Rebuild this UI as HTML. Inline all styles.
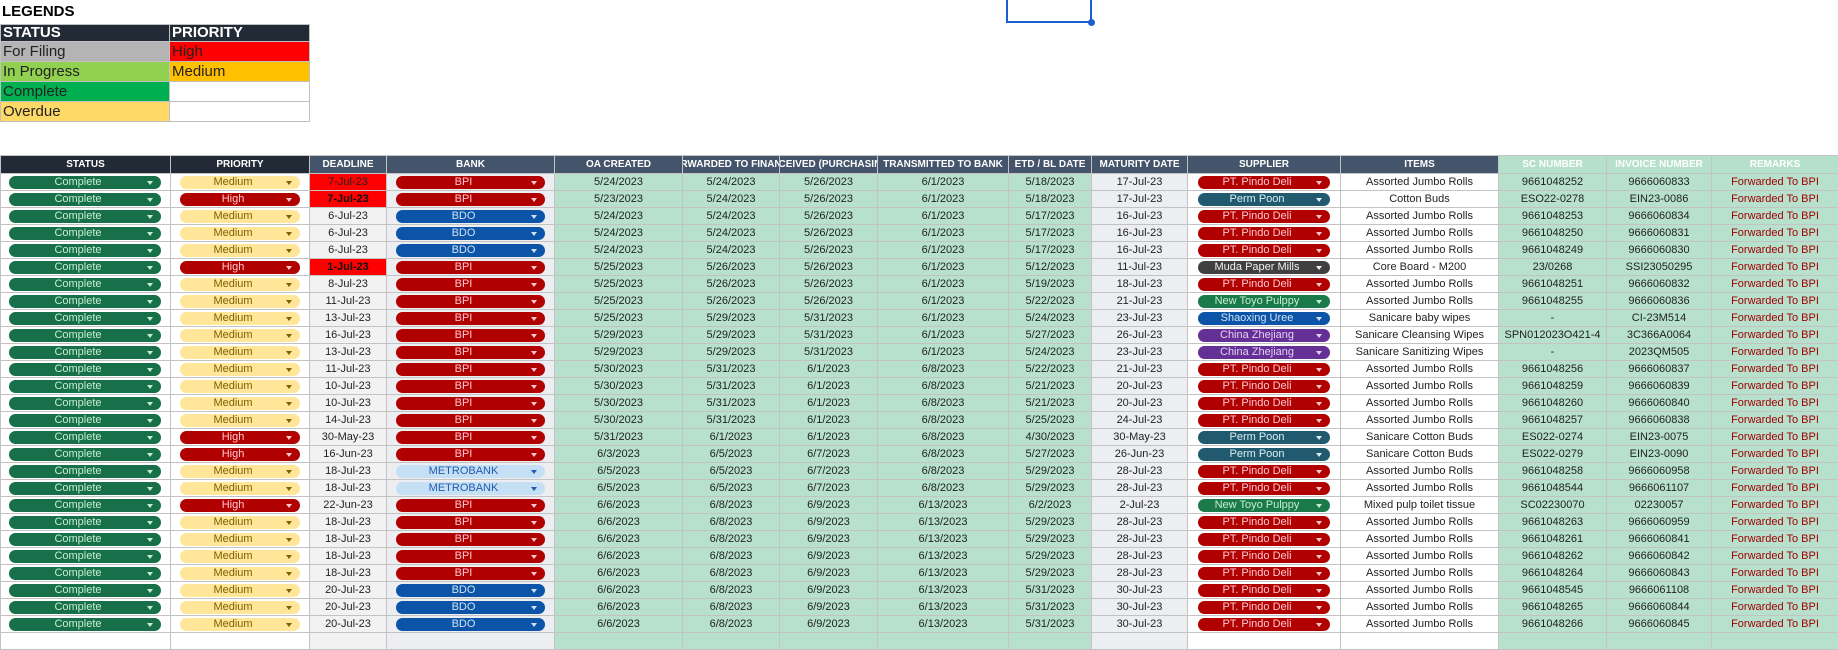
<!DOCTYPE html>
<html><head><meta charset="utf-8"><style>
*{margin:0;padding:0;box-sizing:border-box}
body{width:1838px;height:636px;overflow:hidden;background:#fff;font-family:"Liberation Sans",sans-serif;position:relative}
.lg{position:absolute;left:2px;top:3px;font-weight:bold;font-size:15px;color:#000}
.lt{position:absolute;left:0;top:24px;border-collapse:collapse;table-layout:fixed}
.lt td{border:1px solid #c0c0c0;height:20px;font-size:15px;padding-left:2px;color:#222;line-height:18px;white-space:nowrap}
.lt tr:first-child td{background:#222a35;color:#fff;font-weight:bold;height:17px;line-height:16px}
.sel{position:absolute;left:1006px;top:-2px;width:86px;height:25px;border:2px solid #1a5fd0}
.sel:after{content:"";position:absolute;right:-5px;bottom:-5px;width:7px;height:7px;border-radius:50%;background:#1a5fd0}
.t{position:absolute;left:0;top:155px;border-collapse:collapse;table-layout:fixed;width:1838px}
.t td,.t th{border:1px solid #c3c3c3;height:17px;font-size:11px;text-align:center;white-space:nowrap;overflow:hidden;color:#222;padding:0}
.t th{height:18px;font-size:10px;color:#fff;background:#44546a;font-weight:bold}
.t th.k{background:#222a35}.t th.q{background:#b5e0cb}
.t th div{display:flex;justify-content:center;overflow:hidden}
td.d{background:#f2f2f2}td.rd{background:#ff0000}td.rb{background:#ff0000;font-weight:bold;color:#111}
td.b,td.mt{background:#eceef2}td.n{background:#b7e1cd}
td.rm{background:#b7e1cd;color:#a00000}
.p{display:block;height:13px;line-height:13px;border-radius:7px;font-style:normal;font-size:11px;position:relative;padding-right:14px}
.p:after{content:"";position:absolute;right:8px;top:5px;border-left:3.5px solid transparent;border-right:3.5px solid transparent;border-top:4px solid currentColor}
.s .p{margin:0 9px 0 8px}.pr .p{margin:0 9px 0 9px}.b .p{margin:0 9px 0 9px}.sp .p{margin:0 10px 0 10px}
.g{background:#17704a;color:#c6efce}.m{background:#ffe699;color:#7f6000}.h{background:#b00000;color:#ffc7ce}
.r{background:#b00000;color:#ffc7ce}.bd{background:#0b54a8;color:#cfe2f3}.mb{background:#c5dff5;color:#1f5bb0}
.pp{background:#215a6e;color:#d9eef5}.mu{background:#404040;color:#f0f0f0}.nt{background:#1a7a4a;color:#c6efce}
.sx{background:#0b54a8;color:#cfe2f3}.cz{background:#653096;color:#e4d0f5}
</style></head><body>
<div class="lg">LEGENDS</div>
<table class="lt"><colgroup><col style="width:169px"><col style="width:140px"></colgroup>
<tr><td>STATUS</td><td>PRIORITY</td></tr>
<tr><td style="background:#b4b4b4">For Filing</td><td style="background:#ff0000">High</td></tr>
<tr><td style="background:#92d050">In Progress</td><td style="background:#ffc000">Medium</td></tr>
<tr><td style="background:#00b050">Complete</td><td></td></tr>
<tr><td style="background:#ffd966">Overdue</td><td></td></tr>
</table>
<div class="sel"></div>
<table class="t"><colgroup><col style="width:170px"><col style="width:139px"><col style="width:77px"><col style="width:168px"><col style="width:128px"><col style="width:97px"><col style="width:98px"><col style="width:131px"><col style="width:83px"><col style="width:96px"><col style="width:153px"><col style="width:158px"><col style="width:108px"><col style="width:105px"><col style="width:127px"></colgroup>
<tr><th class="k">STATUS</th><th class="k">PRIORITY</th><th>DEADLINE</th><th>BANK</th><th>OA CREATED</th><th><div>FORWARDED TO FINANCE</div></th><th><div>RECEIVED (PURCHASING)</div></th><th>TRANSMITTED TO BANK</th><th>ETD / BL DATE</th><th>MATURITY DATE</th><th>SUPPLIER</th><th>ITEMS</th><th class="q">SC NUMBER</th><th class="q">INVOICE NUMBER</th><th class="q">REMARKS</th></tr>
<tr><td class="s"><i class="p g">Complete</i></td><td class="pr"><i class="p m">Medium</i></td><td class="rd">7-Jul-23</td><td class="b"><i class="p r">BPI</i></td><td class="n">5/24/2023</td><td class="n">5/24/2023</td><td class="n">5/26/2023</td><td class="n">6/1/2023</td><td class="n">5/18/2023</td><td class="mt">17-Jul-23</td><td class="sp"><i class="p r">PT. Pindo Deli</i></td><td>Assorted Jumbo Rolls</td><td class="n">9661048252</td><td class="n">9666060833</td><td class="rm">Forwarded To BPI</td></tr>
<tr><td class="s"><i class="p g">Complete</i></td><td class="pr"><i class="p h">High</i></td><td class="rb">7-Jul-23</td><td class="b"><i class="p r">BPI</i></td><td class="n">5/23/2023</td><td class="n">5/24/2023</td><td class="n">5/26/2023</td><td class="n">6/1/2023</td><td class="n">5/18/2023</td><td class="mt">17-Jul-23</td><td class="sp"><i class="p pp">Perm Poon</i></td><td>Cotton Buds</td><td class="n">ESO22-0278</td><td class="n">EIN23-0086</td><td class="rm">Forwarded To BPI</td></tr>
<tr><td class="s"><i class="p g">Complete</i></td><td class="pr"><i class="p m">Medium</i></td><td class="d">6-Jul-23</td><td class="b"><i class="p bd">BDO</i></td><td class="n">5/24/2023</td><td class="n">5/24/2023</td><td class="n">5/26/2023</td><td class="n">6/1/2023</td><td class="n">5/17/2023</td><td class="mt">16-Jul-23</td><td class="sp"><i class="p r">PT. Pindo Deli</i></td><td>Assorted Jumbo Rolls</td><td class="n">9661048253</td><td class="n">9666060834</td><td class="rm">Forwarded To BPI</td></tr>
<tr><td class="s"><i class="p g">Complete</i></td><td class="pr"><i class="p m">Medium</i></td><td class="d">6-Jul-23</td><td class="b"><i class="p bd">BDO</i></td><td class="n">5/24/2023</td><td class="n">5/24/2023</td><td class="n">5/26/2023</td><td class="n">6/1/2023</td><td class="n">5/17/2023</td><td class="mt">16-Jul-23</td><td class="sp"><i class="p r">PT. Pindo Deli</i></td><td>Assorted Jumbo Rolls</td><td class="n">9661048250</td><td class="n">9666060831</td><td class="rm">Forwarded To BPI</td></tr>
<tr><td class="s"><i class="p g">Complete</i></td><td class="pr"><i class="p m">Medium</i></td><td class="d">6-Jul-23</td><td class="b"><i class="p bd">BDO</i></td><td class="n">5/24/2023</td><td class="n">5/24/2023</td><td class="n">5/26/2023</td><td class="n">6/1/2023</td><td class="n">5/17/2023</td><td class="mt">16-Jul-23</td><td class="sp"><i class="p r">PT. Pindo Deli</i></td><td>Assorted Jumbo Rolls</td><td class="n">9661048249</td><td class="n">9666060830</td><td class="rm">Forwarded To BPI</td></tr>
<tr><td class="s"><i class="p g">Complete</i></td><td class="pr"><i class="p h">High</i></td><td class="rb">1-Jul-23</td><td class="b"><i class="p r">BPI</i></td><td class="n">5/25/2023</td><td class="n">5/26/2023</td><td class="n">5/26/2023</td><td class="n">6/1/2023</td><td class="n">5/12/2023</td><td class="mt">11-Jul-23</td><td class="sp"><i class="p mu">Muda Paper Mills</i></td><td>Core Board - M200</td><td class="n">23/0268</td><td class="n">SSI23050295</td><td class="rm">Forwarded To BPI</td></tr>
<tr><td class="s"><i class="p g">Complete</i></td><td class="pr"><i class="p m">Medium</i></td><td class="d">8-Jul-23</td><td class="b"><i class="p r">BPI</i></td><td class="n">5/25/2023</td><td class="n">5/26/2023</td><td class="n">5/26/2023</td><td class="n">6/1/2023</td><td class="n">5/19/2023</td><td class="mt">18-Jul-23</td><td class="sp"><i class="p r">PT. Pindo Deli</i></td><td>Assorted Jumbo Rolls</td><td class="n">9661048251</td><td class="n">9666060832</td><td class="rm">Forwarded To BPI</td></tr>
<tr><td class="s"><i class="p g">Complete</i></td><td class="pr"><i class="p m">Medium</i></td><td class="d">11-Jul-23</td><td class="b"><i class="p r">BPI</i></td><td class="n">5/25/2023</td><td class="n">5/26/2023</td><td class="n">5/26/2023</td><td class="n">6/1/2023</td><td class="n">5/22/2023</td><td class="mt">21-Jul-23</td><td class="sp"><i class="p nt">New Toyo Pulppy</i></td><td>Assorted Jumbo Rolls</td><td class="n">9661048255</td><td class="n">9666060836</td><td class="rm">Forwarded To BPI</td></tr>
<tr><td class="s"><i class="p g">Complete</i></td><td class="pr"><i class="p m">Medium</i></td><td class="d">13-Jul-23</td><td class="b"><i class="p r">BPI</i></td><td class="n">5/25/2023</td><td class="n">5/29/2023</td><td class="n">5/31/2023</td><td class="n">6/1/2023</td><td class="n">5/24/2023</td><td class="mt">23-Jul-23</td><td class="sp"><i class="p sx">Shaoxing Uree</i></td><td>Sanicare baby wipes</td><td class="n">-</td><td class="n">CI-23M514</td><td class="rm">Forwarded To BPI</td></tr>
<tr><td class="s"><i class="p g">Complete</i></td><td class="pr"><i class="p m">Medium</i></td><td class="d">16-Jul-23</td><td class="b"><i class="p r">BPI</i></td><td class="n">5/29/2023</td><td class="n">5/29/2023</td><td class="n">5/31/2023</td><td class="n">6/1/2023</td><td class="n">5/27/2023</td><td class="mt">26-Jul-23</td><td class="sp"><i class="p cz">China Zhejiang</i></td><td>Sanicare Cleansing Wipes</td><td class="n">SPN012023O421-4</td><td class="n">3C366A0064</td><td class="rm">Forwarded To BPI</td></tr>
<tr><td class="s"><i class="p g">Complete</i></td><td class="pr"><i class="p m">Medium</i></td><td class="d">13-Jul-23</td><td class="b"><i class="p r">BPI</i></td><td class="n">5/29/2023</td><td class="n">5/29/2023</td><td class="n">5/31/2023</td><td class="n">6/1/2023</td><td class="n">5/24/2023</td><td class="mt">23-Jul-23</td><td class="sp"><i class="p cz">China Zhejiang</i></td><td>Sanicare Sanitizing Wipes</td><td class="n">-</td><td class="n">2023QM505</td><td class="rm">Forwarded To BPI</td></tr>
<tr><td class="s"><i class="p g">Complete</i></td><td class="pr"><i class="p m">Medium</i></td><td class="d">11-Jul-23</td><td class="b"><i class="p r">BPI</i></td><td class="n">5/30/2023</td><td class="n">5/31/2023</td><td class="n">6/1/2023</td><td class="n">6/8/2023</td><td class="n">5/22/2023</td><td class="mt">21-Jul-23</td><td class="sp"><i class="p r">PT. Pindo Deli</i></td><td>Assorted Jumbo Rolls</td><td class="n">9661048256</td><td class="n">9666060837</td><td class="rm">Forwarded To BPI</td></tr>
<tr><td class="s"><i class="p g">Complete</i></td><td class="pr"><i class="p m">Medium</i></td><td class="d">10-Jul-23</td><td class="b"><i class="p r">BPI</i></td><td class="n">5/30/2023</td><td class="n">5/31/2023</td><td class="n">6/1/2023</td><td class="n">6/8/2023</td><td class="n">5/21/2023</td><td class="mt">20-Jul-23</td><td class="sp"><i class="p r">PT. Pindo Deli</i></td><td>Assorted Jumbo Rolls</td><td class="n">9661048259</td><td class="n">9666060839</td><td class="rm">Forwarded To BPI</td></tr>
<tr><td class="s"><i class="p g">Complete</i></td><td class="pr"><i class="p m">Medium</i></td><td class="d">10-Jul-23</td><td class="b"><i class="p r">BPI</i></td><td class="n">5/30/2023</td><td class="n">5/31/2023</td><td class="n">6/1/2023</td><td class="n">6/8/2023</td><td class="n">5/21/2023</td><td class="mt">20-Jul-23</td><td class="sp"><i class="p r">PT. Pindo Deli</i></td><td>Assorted Jumbo Rolls</td><td class="n">9661048260</td><td class="n">9666060840</td><td class="rm">Forwarded To BPI</td></tr>
<tr><td class="s"><i class="p g">Complete</i></td><td class="pr"><i class="p m">Medium</i></td><td class="d">14-Jul-23</td><td class="b"><i class="p r">BPI</i></td><td class="n">5/30/2023</td><td class="n">5/31/2023</td><td class="n">6/1/2023</td><td class="n">6/8/2023</td><td class="n">5/25/2023</td><td class="mt">24-Jul-23</td><td class="sp"><i class="p r">PT. Pindo Deli</i></td><td>Assorted Jumbo Rolls</td><td class="n">9661048257</td><td class="n">9666060838</td><td class="rm">Forwarded To BPI</td></tr>
<tr><td class="s"><i class="p g">Complete</i></td><td class="pr"><i class="p h">High</i></td><td class="d">30-May-23</td><td class="b"><i class="p r">BPI</i></td><td class="n">5/31/2023</td><td class="n">6/1/2023</td><td class="n">6/1/2023</td><td class="n">6/8/2023</td><td class="n">4/30/2023</td><td class="mt">30-May-23</td><td class="sp"><i class="p pp">Perm Poon</i></td><td>Sanicare Cotton Buds</td><td class="n">ES022-0274</td><td class="n">EIN23-0075</td><td class="rm">Forwarded To BPI</td></tr>
<tr><td class="s"><i class="p g">Complete</i></td><td class="pr"><i class="p h">High</i></td><td class="d">16-Jun-23</td><td class="b"><i class="p r">BPI</i></td><td class="n">6/3/2023</td><td class="n">6/5/2023</td><td class="n">6/7/2023</td><td class="n">6/8/2023</td><td class="n">5/27/2023</td><td class="mt">26-Jun-23</td><td class="sp"><i class="p pp">Perm Poon</i></td><td>Sanicare Cotton Buds</td><td class="n">ES022-0279</td><td class="n">EIN23-0090</td><td class="rm">Forwarded To BPI</td></tr>
<tr><td class="s"><i class="p g">Complete</i></td><td class="pr"><i class="p m">Medium</i></td><td class="d">18-Jul-23</td><td class="b"><i class="p mb">METROBANK</i></td><td class="n">6/5/2023</td><td class="n">6/5/2023</td><td class="n">6/7/2023</td><td class="n">6/8/2023</td><td class="n">5/29/2023</td><td class="mt">28-Jul-23</td><td class="sp"><i class="p r">PT. Pindo Deli</i></td><td>Assorted Jumbo Rolls</td><td class="n">9661048258</td><td class="n">9666060958</td><td class="rm">Forwarded To BPI</td></tr>
<tr><td class="s"><i class="p g">Complete</i></td><td class="pr"><i class="p m">Medium</i></td><td class="d">18-Jul-23</td><td class="b"><i class="p mb">METROBANK</i></td><td class="n">6/5/2023</td><td class="n">6/5/2023</td><td class="n">6/7/2023</td><td class="n">6/8/2023</td><td class="n">5/29/2023</td><td class="mt">28-Jul-23</td><td class="sp"><i class="p r">PT. Pindo Deli</i></td><td>Assorted Jumbo Rolls</td><td class="n">9661048544</td><td class="n">9666061107</td><td class="rm">Forwarded To BPI</td></tr>
<tr><td class="s"><i class="p g">Complete</i></td><td class="pr"><i class="p h">High</i></td><td class="d">22-Jun-23</td><td class="b"><i class="p r">BPI</i></td><td class="n">6/6/2023</td><td class="n">6/8/2023</td><td class="n">6/9/2023</td><td class="n">6/13/2023</td><td class="n">6/2/2023</td><td class="mt">2-Jul-23</td><td class="sp"><i class="p nt">New Toyo Pulppy</i></td><td>Mixed pulp toilet tissue</td><td class="n">SC02230070</td><td class="n">02230057</td><td class="rm">Forwarded To BPI</td></tr>
<tr><td class="s"><i class="p g">Complete</i></td><td class="pr"><i class="p m">Medium</i></td><td class="d">18-Jul-23</td><td class="b"><i class="p r">BPI</i></td><td class="n">6/6/2023</td><td class="n">6/8/2023</td><td class="n">6/9/2023</td><td class="n">6/13/2023</td><td class="n">5/29/2023</td><td class="mt">28-Jul-23</td><td class="sp"><i class="p r">PT. Pindo Deli</i></td><td>Assorted Jumbo Rolls</td><td class="n">9661048263</td><td class="n">9666060959</td><td class="rm">Forwarded To BPI</td></tr>
<tr><td class="s"><i class="p g">Complete</i></td><td class="pr"><i class="p m">Medium</i></td><td class="d">18-Jul-23</td><td class="b"><i class="p r">BPI</i></td><td class="n">6/6/2023</td><td class="n">6/8/2023</td><td class="n">6/9/2023</td><td class="n">6/13/2023</td><td class="n">5/29/2023</td><td class="mt">28-Jul-23</td><td class="sp"><i class="p r">PT. Pindo Deli</i></td><td>Assorted Jumbo Rolls</td><td class="n">9661048261</td><td class="n">9666060841</td><td class="rm">Forwarded To BPI</td></tr>
<tr><td class="s"><i class="p g">Complete</i></td><td class="pr"><i class="p m">Medium</i></td><td class="d">18-Jul-23</td><td class="b"><i class="p r">BPI</i></td><td class="n">6/6/2023</td><td class="n">6/8/2023</td><td class="n">6/9/2023</td><td class="n">6/13/2023</td><td class="n">5/29/2023</td><td class="mt">28-Jul-23</td><td class="sp"><i class="p r">PT. Pindo Deli</i></td><td>Assorted Jumbo Rolls</td><td class="n">9661048262</td><td class="n">9666060842</td><td class="rm">Forwarded To BPI</td></tr>
<tr><td class="s"><i class="p g">Complete</i></td><td class="pr"><i class="p m">Medium</i></td><td class="d">18-Jul-23</td><td class="b"><i class="p r">BPI</i></td><td class="n">6/6/2023</td><td class="n">6/8/2023</td><td class="n">6/9/2023</td><td class="n">6/13/2023</td><td class="n">5/29/2023</td><td class="mt">28-Jul-23</td><td class="sp"><i class="p r">PT. Pindo Deli</i></td><td>Assorted Jumbo Rolls</td><td class="n">9661048264</td><td class="n">9666060843</td><td class="rm">Forwarded To BPI</td></tr>
<tr><td class="s"><i class="p g">Complete</i></td><td class="pr"><i class="p m">Medium</i></td><td class="d">20-Jul-23</td><td class="b"><i class="p bd">BDO</i></td><td class="n">6/6/2023</td><td class="n">6/8/2023</td><td class="n">6/9/2023</td><td class="n">6/13/2023</td><td class="n">5/31/2023</td><td class="mt">30-Jul-23</td><td class="sp"><i class="p r">PT. Pindo Deli</i></td><td>Assorted Jumbo Rolls</td><td class="n">9661048545</td><td class="n">9666061108</td><td class="rm">Forwarded To BPI</td></tr>
<tr><td class="s"><i class="p g">Complete</i></td><td class="pr"><i class="p m">Medium</i></td><td class="d">20-Jul-23</td><td class="b"><i class="p bd">BDO</i></td><td class="n">6/6/2023</td><td class="n">6/8/2023</td><td class="n">6/9/2023</td><td class="n">6/13/2023</td><td class="n">5/31/2023</td><td class="mt">30-Jul-23</td><td class="sp"><i class="p r">PT. Pindo Deli</i></td><td>Assorted Jumbo Rolls</td><td class="n">9661048265</td><td class="n">9666060844</td><td class="rm">Forwarded To BPI</td></tr>
<tr><td class="s"><i class="p g">Complete</i></td><td class="pr"><i class="p m">Medium</i></td><td class="d">20-Jul-23</td><td class="b"><i class="p bd">BDO</i></td><td class="n">6/6/2023</td><td class="n">6/8/2023</td><td class="n">6/9/2023</td><td class="n">6/13/2023</td><td class="n">5/31/2023</td><td class="mt">30-Jul-23</td><td class="sp"><i class="p r">PT. Pindo Deli</i></td><td>Assorted Jumbo Rolls</td><td class="n">9661048266</td><td class="n">9666060845</td><td class="rm">Forwarded To BPI</td></tr>
<tr><td></td><td></td><td class="d"></td><td class="b"></td><td class="n"></td><td class="n"></td><td class="n"></td><td class="n"></td><td class="n"></td><td class="mt"></td><td></td><td></td><td class="n"></td><td class="n"></td><td class="rm"></td></tr>
</table>
</body></html>
